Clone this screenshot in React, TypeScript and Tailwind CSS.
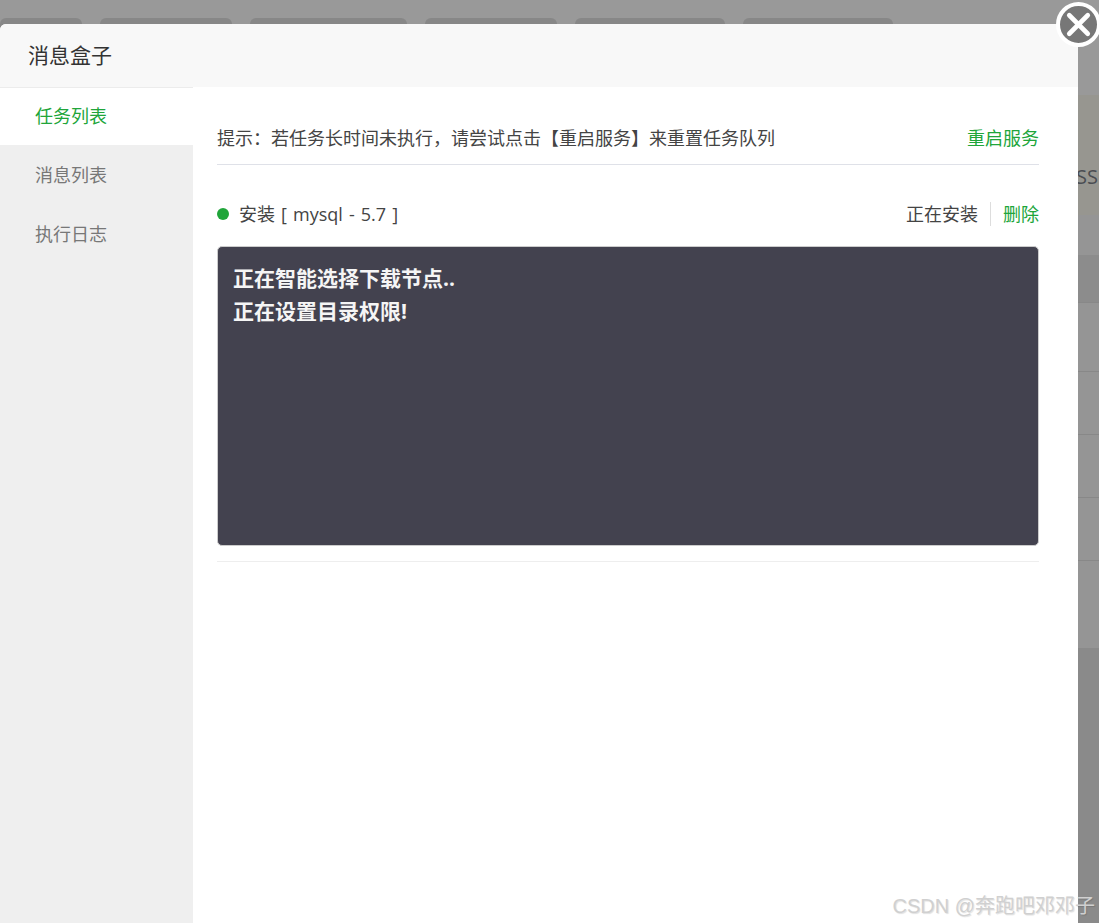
import { X } from 'lucide-react';

const BG_TABS = ['w-[82px]', 'w-[132px]', 'w-[157px]', 'w-[132px]', 'w-[150px]', 'w-[150px]'];
const NAV_ITEMS = ['任务列表', '消息列表', '执行日志'];
const BG_ROWS = ['h-[69px]', 'h-[63px]', 'h-[63px]', 'h-[63px]', 'h-[88px]'];

function Backdrop() {
  return (
    <div className="h-full bg-[#999999]">
      <div className="flex gap-[18px] h-[95px] pt-[18px]">
        {BG_TABS.map((w, i) => (
          <div key={i} className={`${w} h-[20px] rounded-t-[6px] bg-[#878787]`} />
        ))}
      </div>
      <div className="h-[120px] bg-[#979690] flex justify-end items-start pt-[68px] pr-[1px]">
        <span className="text-[20px] leading-[27px] text-[#4a4d52]">SS</span>
      </div>
      <div className="h-[40px] bg-[#959595]" />
      <div className="h-[47px] bg-[#8c8c8c]" />
      {BG_ROWS.map((h, i) => (
        <div key={i} className={`${h} bg-[#959595] border-t border-[#888888]`} />
      ))}
      <div className="h-[275px] bg-[#8a8a8a]" />
    </div>
  );
}

export default function App() {
  return (
    <div className="relative h-[923px] w-[1099px] overflow-hidden font-['Open_Sans','Noto_Sans_CJK_SC',sans-serif]">
      <Backdrop />

      {/* Modal */}
      <div className="absolute left-0 top-[24px] bottom-0 w-[1078px] flex flex-col bg-white rounded-tl-[6px] overflow-hidden">
        <div className="h-[63px] shrink-0 bg-[#f8f8f8] pl-[28px] flex items-center">
          <h3 className="text-[21px] font-normal text-[#333333] leading-none">消息盒子</h3>
        </div>
        <div className="flex flex-1 min-h-0">
          <div className="w-[193px] shrink-0 bg-[#efefef]">
            {NAV_ITEMS.map((item, i) => (
              <div
                key={item}
                className={
                  i === 0
                    ? 'h-[58px] pl-[35px] flex items-center text-[18px] bg-white text-[#20a53a] border-t border-[#ececec]'
                    : 'h-[59px] pl-[35px] pt-[2px] flex items-center text-[18px] text-[#777777]'
                }
              >
                {item}
              </div>
            ))}
          </div>

          <div className="flex-1 pl-[24px] pr-[39px]">
            <div className="h-[78px] pt-[38px] flex justify-between items-start border-b border-[#dfe1e8]">
              <span className="text-[18px] leading-[27px] text-[#444444]">提示：若任务长时间未执行，请尝试点击【重启服务】来重置任务队列</span>
              <span className="text-[18px] leading-[27px] text-[#20a53a]">重启服务</span>
            </div>

            <div className="flex items-center justify-between h-[82px] pt-[16px]">
              <div className="flex items-center">
                <span className="w-[12px] h-[12px] rounded-full bg-[#20a53a] mr-[10px]" />
                <span className="text-[18px] text-[#444444] [word-spacing:1.4px]">安装 [ mysql - 5.7 ]</span>
              </div>
              <div className="flex items-center text-[18px]">
                <span className="text-[#444444]">正在安装</span>
                <span className="w-px h-[24px] bg-[#dddddd] mx-[12px]" />
                <span className="text-[#20a53a]">删除</span>
              </div>
            </div>

            <div className="h-[300px] rounded-[5px] border border-[#cccccc] bg-[#43424f] pl-[15px] pt-[15px] text-[21px] leading-[33px] font-bold text-[#f5f5f5] -mt-px">
              <div>正在智能选择下载节点..</div>
              <div>正在设置目录权限!</div>
            </div>
            <div className="mt-[15px] border-t border-[#eeeeee]" />
          </div>
        </div>
      </div>

      {/* Close button */}
      <div className="absolute left-[1056px] top-[2px] w-[45px] h-[45px] rounded-full bg-[#777777] border-[4px] border-white flex items-center justify-center">
        <X size={37} strokeWidth={3} className="text-white shrink-0" />
      </div>

      {/* Watermark */}
      <div className="absolute right-[4px] top-[892px] text-[20px] leading-[28px] text-[#d0d0d0] font-['Liberation_Sans','Noto_Sans_CJK_SC',sans-serif] [text-shadow:1px_1px_1px_rgba(0,0,0,0.12)]">
        CSDN @奔跑吧邓邓子
      </div>
    </div>
  );
}
